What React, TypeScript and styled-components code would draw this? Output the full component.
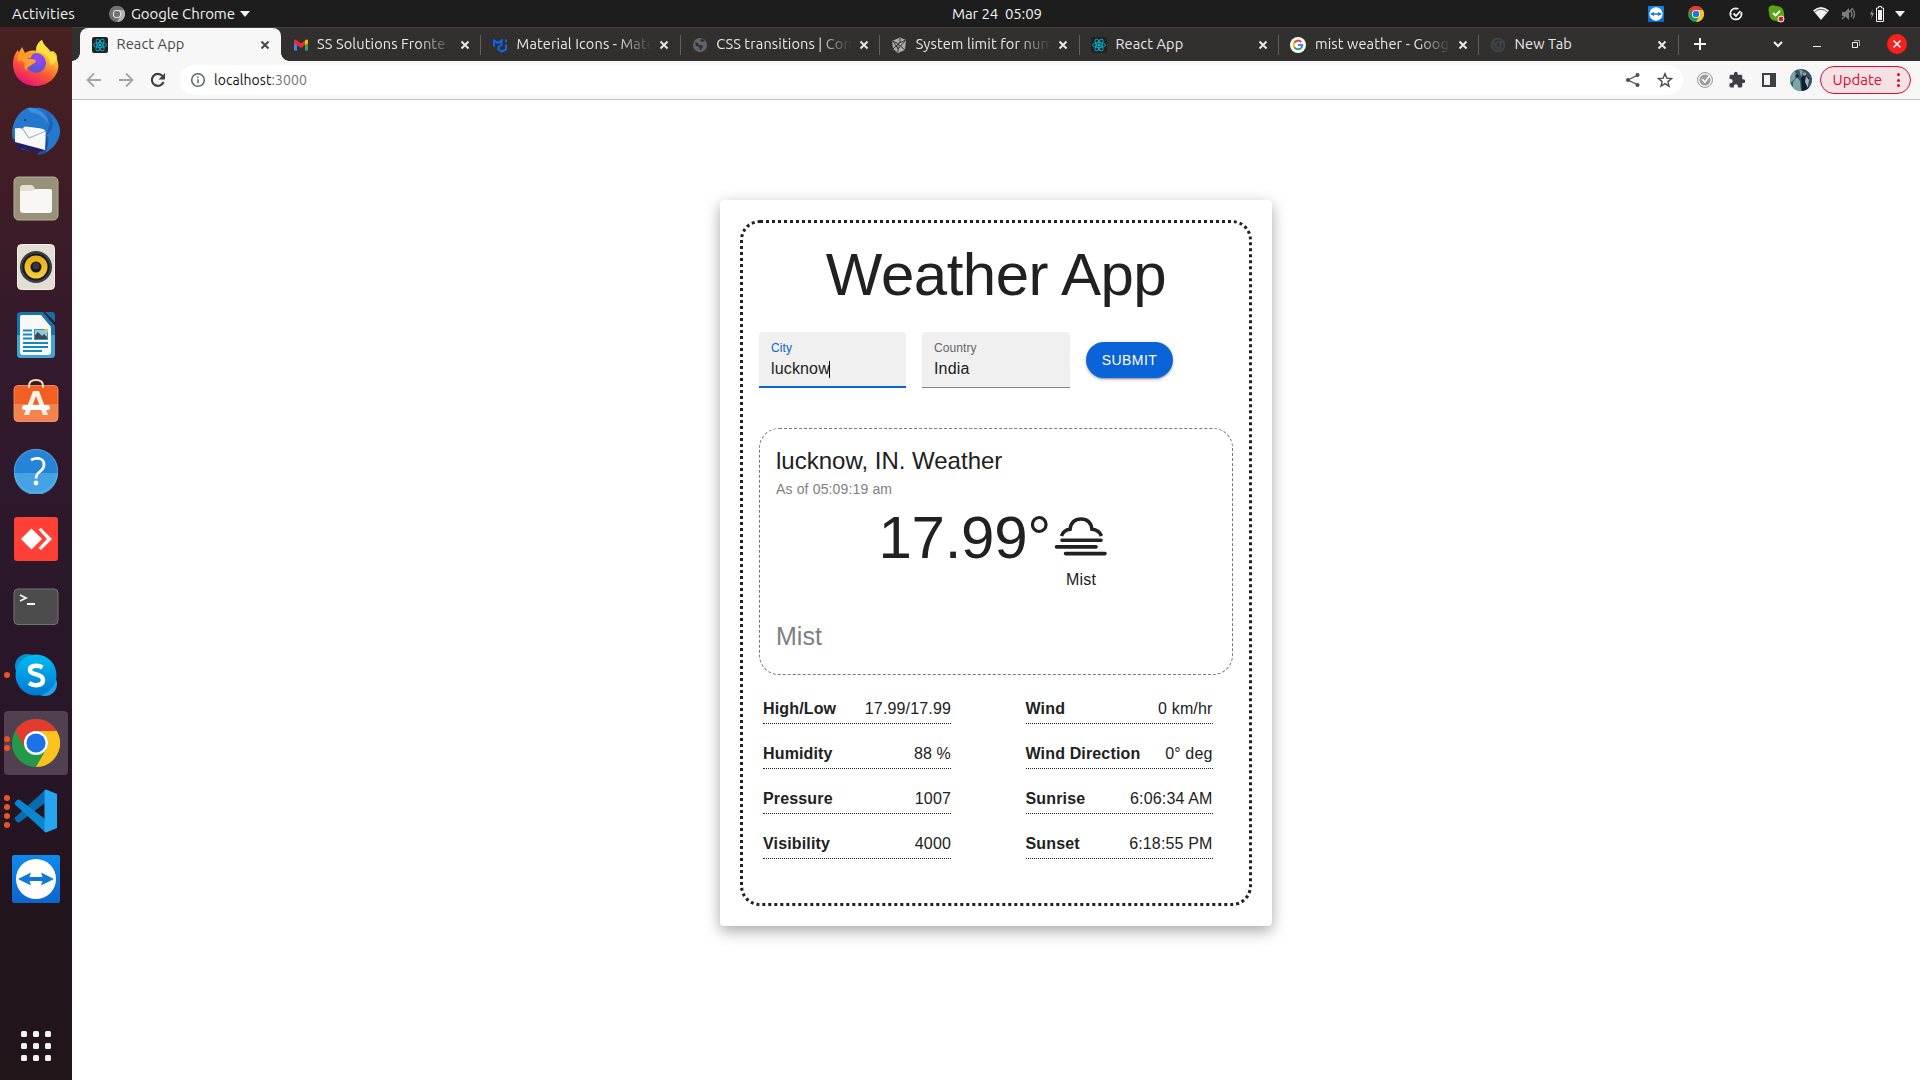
import React from "react";
import styled, { createGlobalStyle } from "styled-components";
import { MdExtension } from "react-icons/md";

const ui = `Ubuntu, "Noto Sans", "Open Sans", sans-serif`;
const body = `"Liberation Sans", Arial, sans-serif`;

const Global = createGlobalStyle`
  *, *::before, *::after { box-sizing: border-box; }
  html, body { margin: 0; height: 100%; background: #fff; overflow: hidden; }
  svg { display: block; flex: none; }
`;

const Desktop = styled.div`
  display: flex; flex-direction: column; width: 1920px; height: 1080px; overflow: hidden; font-family: ${ui};
`;
const TopBar = styled.header`
  height: 27px; flex: none; display: grid; grid-template-columns: 1fr auto 1fr; align-items: center;
  background: #1d1d1d; color: #f2f2f2; font-size: 15px; line-height: 27px; white-space: pre;
`;
const TopLeft = styled.div`display: flex; align-items: center; padding-left: 12px;`;
const Activities = styled.span`width: 97px; letter-spacing: 0.15px;`;
const AppName = styled.span`margin: 0 5px 0 6px; letter-spacing: -0.1px;`;
const Clock = styled.div`padding-left: 74px; letter-spacing: -0.1px;`;
const Tray = styled.div`display: flex; justify-content: flex-end; align-items: center; padding-right: 15px;`;
const TrayItem = styled.span<{ $gap: number }>`margin-left: ${p => p.$gap}px;`;
const Below = styled.div`flex: 1; display: flex; min-height: 0;`;
const Dock = styled.nav`
  width: 72px; flex: none; display: flex; flex-direction: column; align-items: center; gap: 4px; padding: 4px 0 2px;
  background: linear-gradient(#48201f 0%, #3f1d26 14%, #33192c 32%, #2c182b 50%, #281527 68%, #22151e 84%, #201519 100%);
`;
const DockItem = styled.div<{ $active?: boolean; $last?: boolean }>`
  position: relative; width: 64px; height: 64px; border-radius: 4px; display: grid; place-items: center;
  background: ${p => (p.$active ? "#514150" : "transparent")};
  margin-top: ${p => (p.$last ? "auto" : "0")};
`;
const Dots = styled.div`
  position: absolute; left: 0; top: 0; height: 64px; display: flex; flex-direction: column; justify-content: center; gap: 3px;
`;
const Dot = styled.i`width: 6px; height: 6px; border-radius: 50%; background: #e95420;`;
const Browser = styled.main`flex: 1; min-width: 0; display: flex; flex-direction: column; background: #fff;`;
const Strip = styled.div`
  height: 34px; flex: none; display: flex; background: #32302f; border-top: 1px solid #454341; padding-left: 8px;
`;
const Tab = styled.div<{ $active?: boolean }>`
  position: relative; width: ${p => (p.$active ? 200.5 : 199.6)}px; flex: none; display: flex; align-items: center; padding: 0 7.5px 0 12px;
  font-size: 14.6px; line-height: 20px;
  color: ${p => (p.$active ? "#45474a" : "#e8e8e8")};
  background: ${p => (p.$active ? "#f7f7f7" : "transparent")};
  border-radius: 8px 8px 0 0;
  &::before, &::after {
    content: ${p => (p.$active ? '""' : "none")}; position: absolute; bottom: 0; width: 8px; height: 8px;
  }
  &::before { left: -8px; background: radial-gradient(circle at 0 0, transparent 7.5px, #f7f7f7 8px); }
  &::after { right: -8px; background: radial-gradient(circle at 100% 0, transparent 7.5px, #f7f7f7 8px); }
`;
const Divider = styled.i<{ $on?: boolean }>`
  width: 1px; height: 20px; margin: 0 -8.5px 0 7.5px; background: ${p => (p.$on ? "#62605e" : "transparent")};
`;
const TabTitle = styled.span<{ $fade?: boolean }>`
  flex: 1; min-width: 0; margin: 0 4px 0 8.5px; padding-bottom: 2px; white-space: nowrap; letter-spacing: 0.1px;
  mask-image: ${p => (p.$fade ? "linear-gradient(90deg, #000 calc(100% - 34px), transparent)" : "none")};
`;
const StripTools = styled.div`flex: 1; display: flex; align-items: center; padding: 0 13px 1px 14px; color: #f2f2f2;`;
const Push = styled.span`flex: 1;`;
const WinButton = styled.span<{ $close?: boolean; $gap?: number }>`
  width: 20px; height: 20px; margin-left: ${p => p.$gap ?? 0}px; border-radius: 50%; display: grid; place-items: center;
  background: ${p => (p.$close ? "#f8201f" : "transparent")};
`;
const Toolbar = styled.div`
  height: 39px; flex: none; display: flex; align-items: center; padding: 0 9px 0 12px; background: #f7f7f7; border-bottom: 1px solid #c3c3c3;
`;
const NavIcons = styled.div`display: flex; gap: 12px; margin-right: 12px; color: #a3a5a8;`;
const Omnibox = styled.div`
  flex: 1; height: 30px; border-radius: 15px; background: #fff; display: flex; align-items: center; padding: 0 10px;
  font-size: 14px; letter-spacing: 0.06px; color: #111;
`;
const Address = styled.span`flex: 1; margin-left: 8px;`;
const Port = styled.span`color: #6f7276;`;
const PageActions = styled.div`display: flex; gap: 16px;`;
const Actions = styled.div`display: flex; align-items: center; gap: 14px; margin-left: 13px; svg:last-child { margin-left: -2px; }`;
const Update = styled.button`
  width: 91px; height: 28px; margin-left: 8px; border: 1px solid #d80b30; border-radius: 14px; background: #f6e1e4; color: #d80b30;
  font: 15px/26px ${ui}; padding: 0 10px 0 11.5px; display: flex; align-items: center; justify-content: space-between;
`;
const Kebab = styled.span`
  display: grid; gap: 2.5px;
  i { width: 3px; height: 3px; border-radius: 50%; background: #d80b30; }
`;

const Page = styled.section`
  flex: 1; display: flex; justify-content: center; align-items: flex-start; padding-top: 100px; font-family: ${body}; color: #212121;
`;
const Card = styled.article`
  width: 552px; height: 726px; padding: 20px; border-radius: 4px; background: #fff; box-shadow: rgba(0, 0, 0, 0.35) 0 5px 15px;
`;
const Frame = styled.div`height: 686px; border: 3px dotted #212121; border-radius: 20px; padding: 16px;`;
const Title = styled.h1`
  margin: 0 0 21px; font-weight: 400; font-size: 60px; line-height: 72px; letter-spacing: -0.5px; text-align: center;
`;
const Form = styled.div`display: flex; gap: 16px; align-items: center;`;
const Field = styled.label<{ $focus?: boolean }>`
  width: ${p => (p.$focus ? 147 : 148)}px; height: 56px; padding: 8px 12px 0; background: #f0f0f0; border-radius: 4px 4px 0 0; display: flex; flex-direction: column;
  border-bottom: ${p => (p.$focus ? "2px solid #0b63d8" : "1px solid #858585")};
  color: ${p => (p.$focus ? "#0b63d8" : "#666")};
`;
const FieldLabel = styled.span`font-size: 12px; line-height: 16px; letter-spacing: 0.1px;`;
const Value = styled.span`font-size: 16px; line-height: 24px; letter-spacing: 0.15px; padding-top: 1px; color: #212121; display: flex; align-items: center;`;
const Caret = styled.i`width: 1px; height: 17px; background: #000; margin-left: -1px;`;
const Submit = styled.button`
  width: 87px; height: 36px; border: 0; padding: 0; border-radius: 18px; background: #0b63d8; color: #fff; font: 14px/24px ${body};
  letter-spacing: 0.4px;
  box-shadow: 0 3px 1px -2px rgba(0,0,0,.2), 0 2px 2px rgba(0,0,0,.14), 0 1px 5px rgba(0,0,0,.12);
`;
const Summary = styled.section`
  height: 247px; margin-top: 40px; border: 1px dashed #777; border-radius: 20px; padding: 16px;
`;
const Place = styled.h2`margin: 0; font-weight: 400; font-size: 24px; line-height: 32px;`;
const Time = styled.p`margin: 0; color: #808080; font-size: 14px; line-height: 20px; padding-top: 2px; height: 25px; letter-spacing: 0.15px;`;
const Reading = styled.div`display: flex; justify-content: center; gap: 3px; height: 98px; margin-right: 5.5px;`;
const Temp = styled.span`font-size: 60px; line-height: 72px; letter-spacing: -0.25px;`;
const Condition = styled.div`
  display: flex; flex-direction: column; align-items: center; font-size: 16px; line-height: 24px; letter-spacing: 0.15px; padding-top: 1px; gap: 5px;
`;
const Note = styled.p`margin: 18px 0 0; color: #808080; font-size: 25px; line-height: 36px;`;
const Stats = styled.div`display: grid; grid-template-columns: 188px 187px; column-gap: 74.5px; padding: 18px 4px; row-gap: 14px;`;
const Stat = styled.div`
  height: 31px; display: flex; justify-content: space-between; border-bottom: 1px dotted #212121; font-size: 16px; line-height: 31px; letter-spacing: 0.15px;
`;

const Firefox = () => (
  <svg width="48" height="48" viewBox="0 0 48 48">
    <defs>
      <linearGradient id="fx" x1=".8" y1="0" x2=".3" y2="1"><stop offset="0" stopColor="#fff44f" /><stop offset=".35" stopColor="#ffb52e" /><stop offset=".65" stopColor="#ff5634" /><stop offset="1" stopColor="#e5107c" /></linearGradient>
      <radialGradient id="fp" cx=".6" cy=".3"><stop offset="0" stopColor="#a341f5" /><stop offset="1" stopColor="#6055d6" /></radialGradient>
    </defs>
    <path d="M30 1c1 5 6 8 8 13l1-2c5 4 7 9 7.400 15C46 38 36 47 24 47 11 47 1 38 1 25c0-6 2-11 5-14l1 3 3-6 3 6c3-2 7-3 11-2 0-5 2-9 6-11z" fill="url(#fx)" />
    <path d="M30 1c-5 4-7 8-5 12 8 0 13 5 13 13 4 0 8-6 7-9-1-3-2-4-4-5l-2 1C37 9 31 6 30 1z" fill="#ffe244" opacity=".85" />
    <circle cx="24" cy="24" r="10" fill="url(#fp)" />
    <path d="M7 20c4-2 7-1 9 0 3 0 7 0 8 2 0 2-4 3-6 5-2 1-4 2-3 5-3-2-3-6-2-8z" fill="#ff9f2a" />
    <path d="M9 10l4 5c3-2 7-2 10-1-3 1-4 3-4 5l-9 1-4 3c-1-5 1-10 3-13z" fill="#ff9a25" />
  </svg>
);
const Thunderbird = () => (
  <svg width="50" height="50" viewBox="0 0 50 50">
    <defs><linearGradient id="tb" x1="0" y1="0" x2="1" y2="1"><stop offset="0" stopColor="#2b8fe0" /><stop offset="1" stopColor="#173f95" /></linearGradient></defs>
    <path d="M13 4c3-3 8-3 10-2 13-2 25 9 26 22 0 11-7 19-17 24l-6 1 3-4C14 46 5 43 2 34-1 23 4 10 13 4z" fill="url(#tb)" />
    <path d="M2 33c2 7 6 11 9 13l-1-4c6 3 13 5 22 3l3-5z" fill="#241e62" />
    <path d="M4 19l7 1 24 3-1 21L4 36z" fill="#f8f8f8" />
    <path d="M9 19l9 13 17-7" fill="none" stroke="#aeb3b9" strokeWidth="1.200" />
    <path d="M13 4c7-3 18 1 23 9 3 6 2 10-2 17 9-5 10-15 4-23 7 5 12 13 11 20-2 12-10 17-15 20 3-5 4-12 3-17-1 1-3 0-2-4-2-5-14-5-20-7-2 3-4 4-7 3-4 0-5 1-5 1 1-10 5-16 10-19z" fill="#2479cc" />
    <path d="M17 2c10-1 20 6 22 18-5-9-11-12-20-14z" fill="#4ba1e8" opacity=".6" />
    <circle cx="14" cy="14" r="1" fill="#173057" />
  </svg>
);
const Files = () => (
  <svg width="46" height="46" viewBox="0 0 46 46">
    <rect x="1" y="1" width="44" height="43" rx="4.500" fill="#999078" stroke="#b6af9d" />
    <path d="M7 12q0-3 3-3h8q2 0 3 2l1 2h14q2 0 2 2v8H7z" fill="#e3dfd5" />
    <path d="M7 15h12l4-2h14q2 0 2 2v19q0 3-3 3H10q-3 0-3-3z" fill="#f8f7f5" />
  </svg>
);
const Rhythmbox = () => (
  <svg width="38" height="46" viewBox="0 0 38 46">
    <defs><linearGradient id="rb" x1="0" y1="0" x2="0" y2="1"><stop stopColor="#e8ac12" /><stop offset="1" stopColor="#f7cd3e" /></linearGradient></defs>
    <rect x=".5" y=".5" width="37" height="45" rx="4" fill="#e2ded3" stroke="#f4f1ea" />
    <circle cx="19" cy="23" r="16" fill="#3a3d43" /><circle cx="19" cy="23" r="13.500" fill="#17191c" />
    <circle cx="19" cy="23" r="11.500" fill="url(#rb)" /><circle cx="19" cy="23" r="5.500" fill="#17191c" /><circle cx="19" cy="22" r="3.500" fill="#33363a" />
  </svg>
);
const Writer = () => (
  <svg width="38" height="46" viewBox="0 0 38 46">
    <path d="M4 0h22l12 14v28q0 4-4 4H4q-4 0-4-4V4q0-4 4-4z" fill="#1576ab" />
    <path d="M0 23h38v19q0 4-4 4H4q-4 0-4-4z" fill="#43a2d4" />
    <path d="M28 0h7q3 0 3 3v7z" fill="#176f9f" />
    <path d="M5 3h19l10 12v25q0 3-3 3H6q-3 0-3-3V5q0-2 2-2z" fill="#f8f8f8" />
    <path d="M6 18.500h9M6 22.500h9M6 26.500h9M6 31h25M6 35h25M6 39h19" stroke="#1985bd" strokeWidth="2" />
    <rect x="17" y="17" width="14" height="11" fill="#3b93c3" /><rect x="18" y="18" width="12" height="9" fill="#8dc9e4" />
    <path d="M18 27v-4l3-3 4 4 2-2 3 3v2z" fill="#42484e" /><path d="M27 17h4v4z" fill="#f9b72e" />
  </svg>
);
const Software = () => (
  <svg width="46" height="52" viewBox="0 0 46 52">
    <rect x="1" y="8.500" width="44" height="36" rx="4" fill="#f15f25" />
    <path d="M1 27h44v13.500q0 4-4 4H5q-4 0-4-4z" fill="#f3824f" />
    <rect x="1" y="8.500" width="44" height="36" rx="4" fill="none" stroke="#ff9c70" strokeWidth=".8" />
    <path d="M16 11V9q0-6 7-6t7 6v2" fill="none" stroke="#f9dcae" strokeWidth="2" />
    <path d="M20 14h6l9 24h-5l-7-19-7 19h-5z" fill="#fff1e7" /><rect x="9" y="28" width="28" height="5" rx="2.500" fill="#fff" />
  </svg>
);
const HelpIcon = () => (
  <svg width="46" height="46" viewBox="0 0 46 46">
    <circle cx="23" cy="23" r="22" fill="#2584d8" /><path d="M1 25h44A22 22 0 0 1 1 25z" fill="#46a3e3" />
    <circle cx="23" cy="23" r="21.700" fill="none" stroke="#72bcf0" strokeWidth=".6" />
    <path d="M18 12q4-2 8-1.500 5 1 5 6 0 4-4 7-4 3-4 7" fill="none" stroke="#fff" strokeWidth="2.800" /><circle cx="23" cy="35" r="2.400" fill="#fff" />
  </svg>
);
const AnyDesk = () => (
  <svg width="46" height="46" viewBox="0 0 46 46">
    <rect x="1" y="1" width="44" height="44" rx="3" fill="#fe4036" />
    <path d="M18.500 12.500L29 23 18.500 33.500 8 23z" fill="#fff" /><path d="M25.500 13.500l2.500-1.500L39 23 28 34l-2.500-2L34 23z" fill="#fff" />
  </svg>
);
const Terminal = () => (
  <svg width="46" height="38" viewBox="0 0 46 38">
    <rect x="1" y="1" width="44" height="35.500" rx="4" fill="#4c4c4c" stroke="#747474" />
    <path d="M7 7l6 3-6 3M14 16h8" stroke="#f6f6f6" strokeWidth="1.800" fill="none" />
  </svg>
);
const Skype = () => (
  <svg width="44" height="44" viewBox="0 0 44 44">
    <defs><linearGradient id="sk" x1="0" y1="0" x2="0" y2="1"><stop stopColor="#00bcf2" /><stop offset="1" stopColor="#0078d4" /></linearGradient></defs>
    <circle cx="13" cy="13" r="12" fill="#0b8ccf" /><circle cx="31" cy="31" r="12" fill="#20a5e8" />
    <circle cx="22" cy="22" r="20.500" fill="url(#sk)" />
    <path d="M28.500 14.500C23 11 15 13 16 17.500c1 5 13 3 13 9.500 0 6-9 6.500-14 3" stroke="#fff" strokeWidth="4.500" fill="none" />
  </svg>
);
const ChromeIcon = ({ size = 48, mono }: { size?: number; mono?: string }) => (
  <svg width={size} height={size} viewBox="0 0 48 48">
    <circle cx="24" cy="24" r="24" fill={mono ?? "#24994a"} />
    <path d="M3.200 12A24 24 0 0 1 44.800 12H24a12 12 0 0 0-10.400 18z" fill={mono ?? "#e33b2e"} />
    <path d="M44.800 12A24 24 0 0 1 24 48l10.400-18A12 12 0 0 0 24 12z" fill={mono ? "#b5b5b5" : "#fcc31e"} />
    <circle cx="24" cy="24" r="12" fill="#fff" /><circle cx="24" cy="24" r="9.600" fill={mono ?? "#1a73e8"} />
  </svg>
);
const VSCode = () => (
  <svg width="44" height="44" viewBox="0 0 44 44">
    <path d="M1 30.500q-1-1 0-2L31 1v13L6 33q-1.500 1-3 0z" fill="#0b6bad" />
    <path d="M1 13.500q-1 1 0 2L31 43V30L6 11q-1.500-1-3 0z" fill="#0a85cf" />
    <path d="M32 .500L43 5v34l-11 4.500q-1.500 0-1.500-1.500V2q0-1.500 1.500-1.500z" fill="#28a5f0" />
  </svg>
);
const TeamViewer = ({ size = 48 }: { size?: number }) => (
  <svg width={size} height={size} viewBox="0 0 48 48">
    <defs><linearGradient id="tv" x1="0" y1="0" x2="0" y2="1"><stop stopColor="#1089ec" /><stop offset="1" stopColor="#0b66cc" /></linearGradient></defs>
    <rect width="48" height="48" rx="2" fill="url(#tv)" /><circle cx="24" cy="24" r="20" fill="#fff" />
    <path d="M6 24l13-6.500-1.500 4.500h13L29 17.500 42 24l-13 6.500 1.500-4.500h-13l1.500 4.500z" fill="#1078dc" />
  </svg>
);
const AppGrid = () => (
  <svg width="30" height="30" viewBox="0 0 30 30" fill="#f3f1f2">
    {[0, 12, 24].map(y => [0, 12, 24].map(x => <rect key={x + "-" + y} x={x} y={y} width="6" height="6" rx="1.500" />))}
  </svg>
);
const Down = () => <svg width="10" height="6" viewBox="0 0 10 6"><path d="M0 0h10L5 6z" fill="#f2f2f2" /></svg>;
const CloseX = ({ c = "currentColor", w = 2 }: { c?: string; w?: number }) => (
  <svg width="16" height="16" viewBox="0 0 16 16"><path d="M4.500 4.500l7 7m0-7l-7 7" stroke={c} strokeWidth={w} /></svg>
);
const ReactFav = () => (
  <svg width="16" height="16" viewBox="0 0 16 16">
    <rect width="16" height="16" rx="2" fill="#222" />
    <g fill="none" stroke="#00b6cc" strokeWidth=".9">
      {[0, 60, 120].map(a => <ellipse key={a} cx="8" cy="8" rx="6.500" ry="2.500" transform={`rotate(${a} 8 8)`} />)}
    </g><circle cx="8" cy="8" r="1.300" fill="#00c6dc" />
  </svg>
);
const GmailFav = () => (
  <svg width="16" height="16" viewBox="0 0 16 16">
    <path d="M1 4v9.500h3V7z" fill="#4285f4" /><path d="M12 7v6.500h3V4z" fill="#34a853" />
    <path d="M12 3.500l1-.800q2-.6 2 1.300v2L12 8z" fill="#fbbc04" /><path d="M1 4q0-2 2-1.300L8 6.500l4-3V8l-4 3-4-3-3-2z" fill="#ea2b35" />
  </svg>
);
const MuiFav = () => (
  <svg width="16" height="16" viewBox="0 0 16 16" fill="none" stroke="#0b66f5" strokeWidth="2">
    <path d="M2 9.500V3.500l4 2.500 3.500-2.500V8L6.500 10v2.500l3.500 2 4-2.200V7.500M14 2.500v2.500" />
  </svg>
);
const GlobeFav = () => (
  <svg width="16" height="16" viewBox="0 0 16 16">
    <circle cx="8" cy="8" r="7" fill="#5f656b" /><path d="M3 5l3 1 1 2 3 0 1 2-2 3H8l-1-3-3-1zM9 2l-1 2 2 1 3-1-2-2z" fill="#32302f" />
  </svg>
);
const CubeFav = () => (
  <svg width="16" height="16" viewBox="0 0 16 16">
    <path d="M1 4l8-3.500L15 3l-1 10-7 3-5-4z" fill="#aaa" />
    <path d="M1 4l6 2.500L15 3M7 6.500V15M2 4l5 8 7-8M2 12l5-5 7 6M9 1v5" stroke="#3a3837" fill="none" />
  </svg>
);
const GoogleFav = () => (
  <svg width="16" height="16" viewBox="0 0 16 16" fill="none" strokeWidth="2">
    <circle cx="8" cy="8" r="8" fill="#fff" /><path d="M11.200 5A4.300 4.300 0 0 0 4.300 5.800" stroke="#ea4335" />
    <path d="M4.300 5.800a4.300 4.300 0 0 0 0 4.400" stroke="#fbbc05" /><path d="M4.300 10.200a4.300 4.300 0 0 0 6.800.8" stroke="#34a853" /><path d="M8 8h4.200a4.300 4.300 0 0 1-1.100 3" stroke="#4285f4" />
  </svg>
);
const ChromeFav = () => (
  <svg width="16" height="16" viewBox="0 0 16 16" fill="none" stroke="#3d4449" strokeWidth="2">
    <circle cx="8" cy="8" r="6.300" /><circle cx="8" cy="8" r="2.800" /><path d="M8 5h6M5.500 9.500L3 5M10.500 9.500L8 14" />
  </svg>
);
const TrayClock = () => (
  <svg width="14" height="14" viewBox="0 0 14 14" fill="none" stroke="#f2f2f2">
    <path d="M9.500 1.800A5.700 5.700 0 1 0 12.300 5" strokeWidth="1.500" /><path d="M4.500 6.500L7 9l4.500-5" strokeWidth="1.800" />
    <path d="M7 1v2M1 7h2M7 11v2M11 7h2" />
  </svg>
);
const ExtClock = () => (
  <svg width="18" height="18" viewBox="0 0 18 18">
    <circle cx="9" cy="9" r="7.500" fill="#f0f0f0" stroke="#9a9a9a" /><circle cx="9" cy="9" r="5.500" fill="#9c9c9c" />
    <path d="M6 8l2.800 3L13.500 5" fill="none" stroke="#f5f5f5" strokeWidth="1.800" />
  </svg>
);
const SkypeTray = () => (
  <svg width="17" height="18" viewBox="0 0 17 18">
    <path d="M1 2q3-3 7-1 8 0 8 8 1 5-2 7-3 2-6 0Q1 15 1 8 0 5 1 2z" fill="#58a618" />
    <path d="M5 8l2.500 2.500L12 6" stroke="#fff" strokeWidth="1.800" fill="none" /><circle cx="13" cy="14" r="3" fill="#e02020" stroke="#fff" />
  </svg>
);
const Wifi = () => <svg width="16" height="13" viewBox="0 0 16 13"><path d="M0 3.500Q8-3.500 16 3.500L8 13z" fill="#f2f2f2" /><path d="M1.500 5Q8-.5 14.500 5" fill="none" stroke="#1d1d1d" strokeWidth=".7" /></svg>;
const Muted = () => (
  <svg width="16" height="16" viewBox="0 0 16 16" fill="none" stroke="#7d7d7d" strokeWidth="1.300">
    <path d="M1 6h3l4-4v12l-4-4H1z" fill="#7d7d7d" stroke="none" /><path d="M10 5q2 3 0 6M12 3.500q3 4.500 0 9M1 13L12 2" />
  </svg>
);
const Battery = () => (
  <svg width="16" height="18" viewBox="0 0 16 18">
    <path d="M4 4L1 9.500h2L2 14l3-6H3z" fill="#9a9a9a" /><path d="M7.500 3h2V1.500h3V3h2v13.500h-7z" fill="none" stroke="#f2f2f2" /><rect x="9" y="5" width="4" height="10" fill="#f2f2f2" />
  </svg>
);
const Arrow = ({ flip }: { flip?: boolean }) => (
  <svg width="20" height="20" viewBox="0 0 20 20" fill="none" stroke="#a3a5a8" strokeWidth="1.900" transform={flip ? "scale(-1 1)" : undefined}>
    <path d="M17 10H4M10 3.500L3.500 10l6.500 6.500" />
  </svg>
);
const Reload = () => (
  <svg width="20" height="20" viewBox="0 0 20 20"><path d="M15.500 12A6 6 0 1 1 14.500 6" fill="none" stroke="#3c4043" strokeWidth="2.100" /><path d="M17 3v6.500h-6.500z" fill="#3c4043" /></svg>
);
const Info = () => (
  <svg width="16" height="16" viewBox="0 0 16 16" fill="none" stroke="#5f6368" strokeWidth="1.500"><circle cx="8" cy="8" r="6.300" /><path d="M8 7.200v4M8 4.400V6" /></svg>
);
const Share = () => (
  <svg width="16" height="16" viewBox="0 0 16 16" fill="#4a4d50"><path d="M13 3L3 8l10 5" fill="none" stroke="#4a4d50" strokeWidth="1.300" /><circle cx="12.500" cy="3" r="2" /><circle cx="3" cy="8" r="2" /><circle cx="12.500" cy="13" r="2" /></svg>
);
const Star = () => (
  <svg width="16" height="16" viewBox="0 0 16 16"><path d="M8 1.700l1.800 4.400 4.700.4-3.600 3.100 1.100 4.600L8 11.700l-4 2.500 1.100-4.600-3.600-3.100 4.700-.4z" fill="none" stroke="#4a4d50" strokeWidth="1.400" /></svg>
);
const SidePanel = () => <svg width="18" height="18" viewBox="0 0 18 18"><path d="M2 2h14v14H2zM4 4v10h6V4z" fill="#3c4043" fillRule="evenodd" /></svg>;
const Avatar = () => (
  <svg width="22" height="22" viewBox="0 0 22 22">
    <clipPath id="av"><circle cx="11" cy="11" r="11" /></clipPath>
    <g clipPath="url(#av)"><rect width="22" height="22" fill="#345565" /><path d="M0 5l4-3 3 4-3 5-4 3zM9 0l4 2-2 6z" fill="#7aa5ad" />
      <path d="M3 13l4-5 3 4 1 10H3z" fill="#79a7a9" /><path d="M11 9l4-4 4 4v13h-7z" fill="#15202e" /><path d="M16 7l3 4-1 8-3-6z" fill="#9db9c8" /><circle cx="7" cy="7" r="1.800" fill="#2b2524" /><circle cx="14.500" cy="5" r="1.800" fill="#b89484" /></g>
  </svg>
);
const MistIcon = () => (
  <svg width="54" height="60" viewBox="0 0 54 60" fill="none" stroke="#212121" strokeWidth="3.600" strokeLinecap="round">
    <path d="M7.500 33q2-6 8.500-6.700C17 19 21 16 27 16S37 19 38 26.300q7 .7 9.500 6.700" strokeLinecap="butt" />
    <path d="M8 37.300H47M2.500 43.900H42M11.500 50.600H51" />
  </svg>
);

const dock = [
  { n: "firefox", icon: <Firefox /> }, { n: "thunderbird", icon: <Thunderbird /> }, { n: "files", icon: <Files /> },
  { n: "rhythmbox", icon: <Rhythmbox /> }, { n: "writer", icon: <Writer /> }, { n: "software", icon: <Software /> },
  { n: "help", icon: <HelpIcon /> }, { n: "anydesk", icon: <AnyDesk /> }, { n: "terminal", icon: <Terminal /> },
  { n: "skype", icon: <Skype />, dots: 1 }, { n: "chrome", icon: <ChromeIcon />, dots: 2, active: true },
  { n: "code", icon: <VSCode />, dots: 4 }, { n: "teamviewer", icon: <TeamViewer /> },
];
const tabs = [
  { t: "React App", icon: <ReactFav />, active: true },
  { t: "SS Solutions Fronte", icon: <GmailFav />, fade: true, bar: true },
  { t: "Material Icons - Mate", icon: <MuiFav />, fade: true, bar: true },
  { t: "CSS transitions | Con", icon: <GlobeFav />, fade: true, bar: true },
  { t: "System limit for num", icon: <CubeFav />, fade: true, bar: true },
  { t: "React App", icon: <ReactFav />, bar: true },
  { t: "mist weather - Goog", icon: <GoogleFav />, fade: true, bar: true },
  { t: "New Tab", icon: <ChromeFav />, bar: true },
];
const stats = [
  ["High/Low", "17.99/17.99"], ["Wind", "0 km/hr"], ["Humidity", "88 %"], ["Wind Direction", "0° deg"],
  ["Pressure", "1007"], ["Sunrise", "6:06:34 AM"], ["Visibility", "4000"], ["Sunset", "6:18:55 PM"],
];

export default function App() {
  return (
    <Desktop>
      <Global />
      <TopBar>
        <TopLeft><Activities>Activities</Activities><ChromeIcon size={16} mono="#737373" /><AppName>Google Chrome</AppName><Down /></TopLeft>
        <Clock>Mar 24  05:09</Clock>
        <Tray>
          <TrayItem $gap={0}><TeamViewer size={16} /></TrayItem>
          <TrayItem $gap={24}><ChromeIcon size={16} /></TrayItem>
          <TrayItem $gap={25}><TrayClock /></TrayItem>
          <TrayItem $gap={25}><SkypeTray /></TrayItem>
          <TrayItem $gap={28}><Wifi /></TrayItem>
          <TrayItem $gap={12}><Muted /></TrayItem>
          <TrayItem $gap={12}><Battery /></TrayItem>
          <TrayItem $gap={10}><Down /></TrayItem>
        </Tray>
      </TopBar>
      <Below>
        <Dock>
          {dock.map(d => (
            <DockItem key={d.n} $active={d.active}>
              {d.icon}
              {d.dots && <Dots>{Array.from({ length: d.dots }, (_, i) => <Dot key={i} />)}</Dots>}
            </DockItem>
          ))}
          <DockItem $last><AppGrid /></DockItem>
        </Dock>
        <Browser>
          <Strip>
            {tabs.map((t, i) => (
              <Tab key={i} $active={t.active}>
                {t.icon}<TabTitle $fade={t.fade}>{t.t}</TabTitle><CloseX /><Divider $on={t.bar} />
              </Tab>
            ))}
            <StripTools>
              <svg width="16" height="16" viewBox="0 0 16 16"><path d="M8 2v12M2 8h12" stroke="#f2f2f2" strokeWidth="2" /></svg>
              <Push />
              <WinButton><svg width="12" height="12" viewBox="0 0 12 12"><path d="M2 4l4 4 4-4" fill="none" stroke="#f2f2f2" strokeWidth="2" /></svg></WinButton>
              <WinButton $gap={19}><svg width="8" height="8" viewBox="0 0 8 8"><path d="M0 6.500h8" stroke="#f2f2f2" /></svg></WinButton>
              <WinButton $gap={19}><svg width="8" height="8" viewBox="0 0 8 8" fill="none" stroke="#f2f2f2"><path d="M.5 2.500h5v5h-5z" /><path d="M2 .500h5.500V6" stroke="#a5a5a5" /></svg></WinButton>
              <WinButton $close $gap={21}><CloseX c="#fff" w={1.5} /></WinButton>
            </StripTools>
          </Strip>
          <Toolbar>
            <NavIcons><Arrow /><Arrow flip /><Reload /></NavIcons>
            <Omnibox><Info /><Address>localhost<Port>:3000</Port></Address><PageActions><Share /><Star /></PageActions></Omnibox>
            <Actions>
              <ExtClock /><MdExtension size={18} color="#3c4043" /><SidePanel /><Avatar />
            </Actions>
            <Update>Update<Kebab><i /><i /><i /></Kebab></Update>
          </Toolbar>
          <Page>
            <Card>
              <Frame>
                <Title>Weather App</Title>
                <Form>
                  <Field $focus><FieldLabel>City</FieldLabel><Value>lucknow<Caret /></Value></Field>
                  <Field><FieldLabel>Country</FieldLabel><Value>India</Value></Field>
                  <Submit>SUBMIT</Submit>
                </Form>
                <Summary>
                  <Place>lucknow, IN. Weather</Place>
                  <Time>As of 05:09:19 am</Time>
                  <Reading><Temp>17.99°</Temp><Condition><MistIcon /><span>Mist</span></Condition></Reading>
                  <Note>Mist</Note>
                </Summary>
                <Stats>
                  {stats.map(([k, v]) => <Stat key={k}><b>{k}</b><span>{v}</span></Stat>)}
                </Stats>
              </Frame>
            </Card>
          </Page>
        </Browser>
      </Below>
    </Desktop>
  );
}
